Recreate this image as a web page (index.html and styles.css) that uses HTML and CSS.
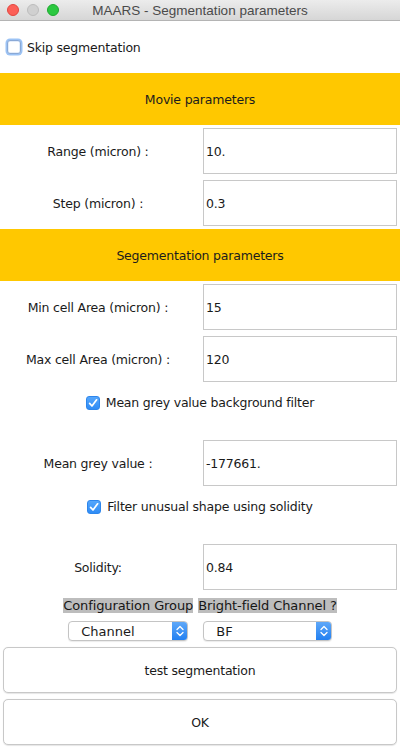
FILE: index.html
```html
<!DOCTYPE html>
<html>
<head>
<meta charset="utf-8">
<title>MAARS - Segmentation parameters</title>
<link rel="stylesheet" href="styles.css">
</head>
<body>
<div class="window">
  <div class="titlebar">
    <div class="lights">
      <span class="light red"></span>
      <span class="light gray"></span>
      <span class="light green"></span>
    </div>
    <div class="title">MAARS - Segmentation parameters</div>
    <div></div>
  </div>
  <div class="content">
    <div class="row row-left">
      <label class="check"><span class="box box-focus"></span><span>Skip segmentation</span></label>
    </div>
    <div class="row band">Movie parameters</div>
    <div class="row field"><div class="lbl">Range (micron) :</div><div class="input">10.</div></div>
    <div class="row field"><div class="lbl">Step (micron) :</div><div class="input">0.3</div></div>
    <div class="row band">Segementation parameters</div>
    <div class="row field"><div class="lbl">Min cell Area (micron) :</div><div class="input">15</div></div>
    <div class="row field"><div class="lbl">Max cell Area (micron) :</div><div class="input">120</div></div>
    <div class="row row-check">
      <label class="check"><span class="box box-on"><svg viewBox="0 0 14 14" width="14" height="14"><path d="M3.6 7.4 L6 10 L10.6 3.8" fill="none" stroke="#fff" stroke-width="1.7" stroke-linecap="round" stroke-linejoin="round"/></svg></span><span>Mean grey value background filter</span></label>
    </div>
    <div class="row field"><div class="lbl">Mean grey value :</div><div class="input">-177661.</div></div>
    <div class="row row-check">
      <label class="check"><span class="box box-on"><svg viewBox="0 0 14 14" width="14" height="14"><path d="M3.6 7.4 L6 10 L10.6 3.8" fill="none" stroke="#fff" stroke-width="1.7" stroke-linecap="round" stroke-linejoin="round"/></svg></span><span>Filter unusual shape using solidity</span></label>
    </div>
    <div class="row field"><div class="lbl lbl-sol">Solidity:</div><div class="input">0.84</div></div>
    <div class="row combos">
      <div class="combo">
        <div class="combo-lbl">Configuration Group</div>
        <div class="select"><span class="sel-text">Channel</span><span class="sel-arrow"><svg viewBox="0 0 16 20" width="16" height="20"><path d="M5 8.5 L8 5.5 L11 8.5 M5 11.5 L8 14.5 L11 11.5" fill="none" stroke="#fff" stroke-width="1.3" stroke-linecap="round" stroke-linejoin="round"/></svg></span></div>
      </div>
      <div class="combo">
        <div class="combo-lbl">Bright-field Channel ?</div>
        <div class="select"><span class="sel-text">BF</span><span class="sel-arrow"><svg viewBox="0 0 16 20" width="16" height="20"><path d="M5 8.5 L8 5.5 L11 8.5 M5 11.5 L8 14.5 L11 11.5" fill="none" stroke="#fff" stroke-width="1.3" stroke-linecap="round" stroke-linejoin="round"/></svg></span></div>
      </div>
    </div>
    <div class="row btn-row"><div class="btn">test segmentation</div></div>
    <div class="row btn-row"><div class="btn">OK</div></div>
  </div>
</div>
</body>
</html>
```
FILE: styles.css
```css
html, body {
  margin: 0;
  padding: 0;
  background: #ffffff;
}
body {
  font-family: "DejaVu Sans", "Liberation Sans", sans-serif;
  font-size: 12.5px;
  letter-spacing: -0.2px;
  color: #1a1a1a;
}
.window {
  width: 400px;
  height: 749px;
  overflow: hidden;
  background: #ffffff;
}
.titlebar {
  height: 20px;
  border-bottom: 1px solid #b4b4b4;
  background: linear-gradient(#ececec, #d6d6d6);
  display: grid;
  grid-template-columns: 1fr auto 1fr;
  align-items: center;
}
.lights {
  display: flex;
  gap: 8px;
  padding-left: 7px;
}
.light {
  width: 12px;
  height: 12px;
  border-radius: 50%;
  box-sizing: border-box;
}
.light.red { background: #fc5f57; border: 1px solid #e2463f; }
.light.gray { background: #d0d0d0; border: 1px solid #bdbdbd; }
.light.green { background: #2bc840; border: 1px solid #1ea92f; }
.title {
  font-family: "Liberation Sans", "Inter", sans-serif;
  font-size: 13.5px;
  letter-spacing: 0;
  color: #4a4a4a;
  white-space: nowrap;
}
.content {
  display: grid;
  grid-template-rows: repeat(14, 52px);
}
.row {
  box-sizing: border-box;
}
.row-left {
  display: flex;
  align-items: center;
  padding-left: 7px;
}
.check {
  display: flex;
  align-items: center;
  gap: 6px;
  white-space: nowrap;
}
.box {
  width: 14px;
  height: 14px;
  box-sizing: border-box;
  border-radius: 3px;
  display: block;
}
.box-focus {
  background: #fff;
  border: 1px solid #8aa9d6;
  box-shadow: 0 0 0 1.5px #9cc3f5, inset 0 0 0 0.5px #c9dcf5;
}
.box-on {
  background: linear-gradient(#55a6fb, #2f8cf5);
  border: 1px solid #2d86ec;
}
.box-on svg {
  display: block;
  margin: -1px;
}
.band {
  background: #ffc800;
  display: flex;
  align-items: center;
  justify-content: center;
  color: #1c1c1c;
}
.field {
  display: grid;
  grid-template-columns: 200px 200px;
  align-items: center;
}
.lbl {
  text-align: center;
  padding-right: 4px;
  white-space: nowrap;
}
.input {
  margin: 0 3px;
  height: 46px;
  box-sizing: border-box;
  border: 1px solid #c8c8c8;
  background: #fff;
  display: flex;
  align-items: center;
  padding-left: 2px;
}
.row-check {
  display: flex;
  justify-content: center;
  align-items: flex-start;
  padding-top: 10px;
}
.combos {
  display: flex;
  justify-content: center;
  align-items: flex-start;
  gap: 5px;
  padding-top: 5px;
}
.combo {
  display: flex;
  flex-direction: column;
}
.combo-lbl {
  background: #bdbdbd;
  height: 15px;
  line-height: 15px;
  font-size: 13px;
  letter-spacing: -0.1px;
  white-space: nowrap;
  color: #161616;
}
.select {
  margin: 8px 5px 0;
  height: 20px;
  box-sizing: border-box;
  border: 1px solid #c4c4c4;
  border-radius: 4px;
  background: #fff;
  box-shadow: 0 1px 1px rgba(0, 0, 0, 0.08);
  display: flex;
  align-items: center;
  justify-content: space-between;
  overflow: hidden;
  font-size: 13px;
  letter-spacing: 0;
}
.sel-text {
  padding-left: 12px;
}
.sel-arrow {
  width: 16px;
  height: 20px;
  margin: -1px -1px -1px 0;
  background: linear-gradient(#62aaf9, #1f7ef1);
  border-radius: 0 4px 4px 0;
}
.sel-arrow svg {
  display: block;
}
.btn-row {
  padding: 2px 3px 4px;
}
.btn {
  height: 46px;
  box-sizing: border-box;
  border: 1px solid #c8c8c8;
  border-radius: 5px;
  background: #fff;
  display: flex;
  align-items: center;
  justify-content: center;
  box-shadow: 0 0.5px 1px rgba(0, 0, 0, 0.1);
}
```
